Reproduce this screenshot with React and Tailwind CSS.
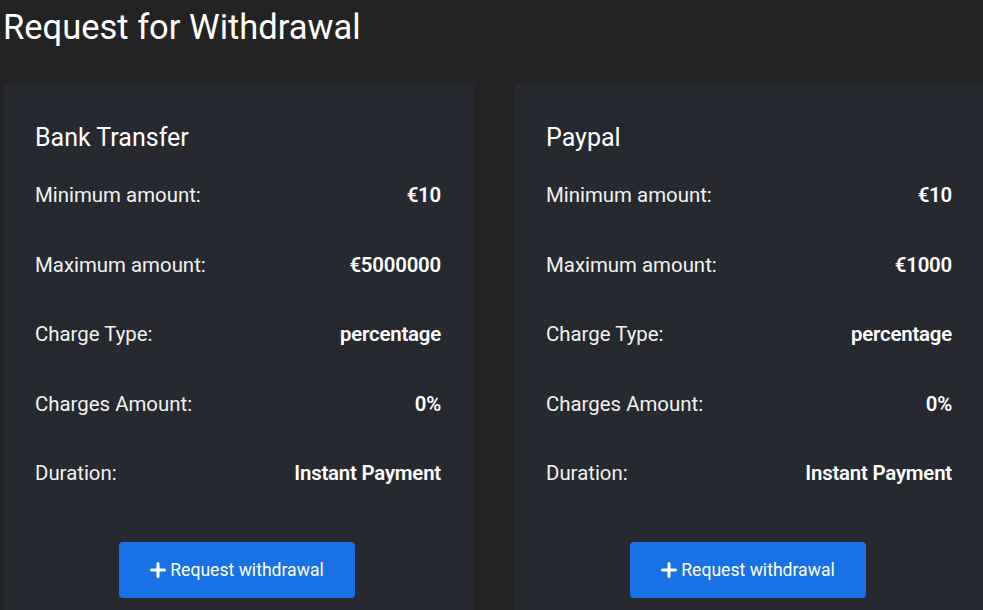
import React from "react";

const cards = [
  {
    title: "Bank Transfer",
    rows: [
      ["Minimum amount:", "€10"],
      ["Maximum amount:", "€5000000"],
      ["Charge Type:", "percentage"],
      ["Charges Amount:", "0%"],
      ["Duration:", "Instant Payment"],
    ],
  },
  {
    title: "Paypal",
    rows: [
      ["Minimum amount:", "€10"],
      ["Maximum amount:", "€1000"],
      ["Charge Type:", "percentage"],
      ["Charges Amount:", "0%"],
      ["Duration:", "Instant Payment"],
    ],
  },
];

function Card({ title, rows }) {
  return (
    <div className="w-[470px] shrink-0 bg-[#262a30] pt-[38px] pl-[31px] pr-[33px] pb-[20px] flex flex-col">
      <h2 className="text-[25px] leading-[32px] text-white font-normal">{title}</h2>
      <div className="mt-[7px] flex flex-col">
        {rows.map(([k, v]) => (
          <div key={k} className="h-[69.5px] flex items-center justify-between text-[20.4px]">
            <span className="text-[#f1f1f1]">{k}</span>
            <span className="text-white font-semibold tracking-[-0.2px]">{v}</span>
          </div>
        ))}
      </div>
      <div className="mt-[33.5px] flex justify-center">
        <button className="w-[236px] h-[56px] rounded-[4px] bg-[#1872e6] text-white text-[17.6px] flex items-center justify-center gap-[4px] mr-[2px]">
          <svg width="16" height="16" viewBox="0 0 16 16" className="mb-[1px]">
            <path d="M8 1.5v13M1.5 8h13" stroke="white" strokeWidth="3" strokeLinecap="round" />
          </svg>
          <span>Request withdrawal</span>
        </button>
      </div>
    </div>
  );
}

export default function App() {
  return (
    <div
      className="w-[983px] h-[610px] overflow-hidden bg-[#232323]"
      style={{ fontFamily: "Roboto, 'Noto Sans', sans-serif" }}
    >
      <h1 className="pl-[3px] pt-[6px] h-[84px] text-[34.5px] leading-[42px] text-white font-normal">
        Request for Withdrawal
      </h1>
      <div className="flex gap-[41px] pl-[4px]">
        {cards.map((c) => (
          <Card key={c.title} {...c} />
        ))}
      </div>
    </div>
  );
}
